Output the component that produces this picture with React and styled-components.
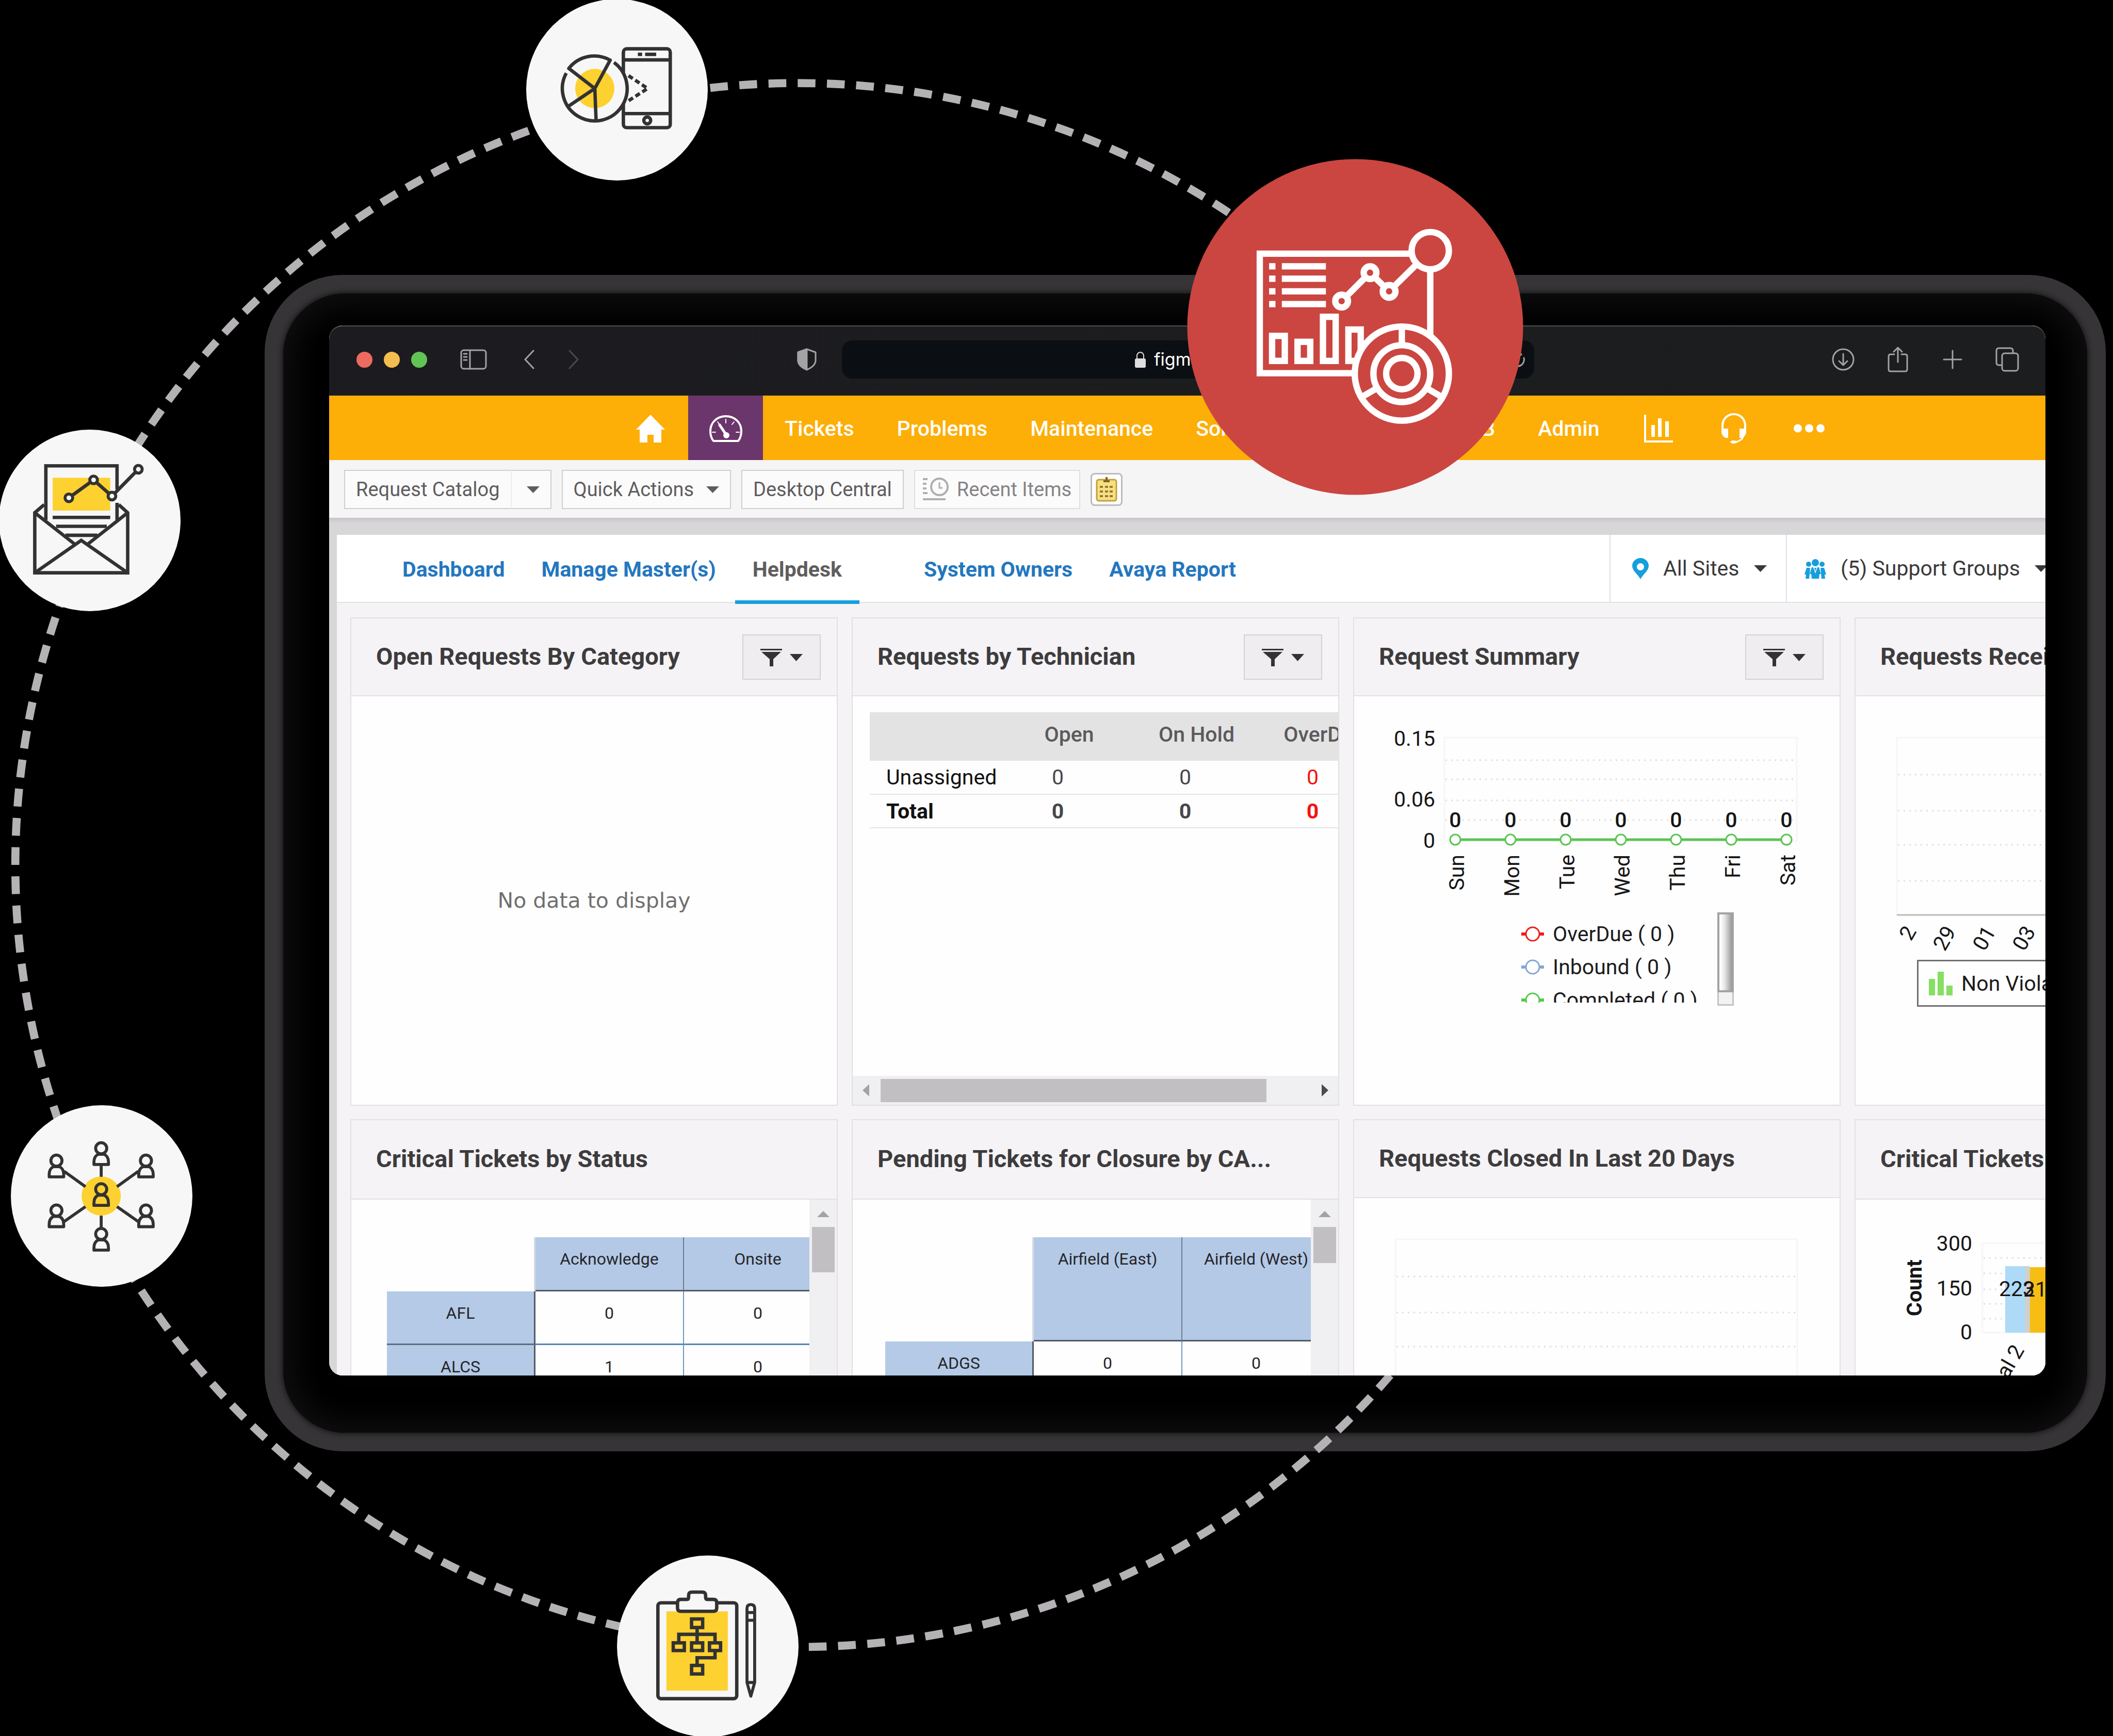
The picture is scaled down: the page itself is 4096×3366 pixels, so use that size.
import React from "react";
import styled, { createGlobalStyle, css } from "styled-components";

const ink = "#333233";
const sun = "#fdd130";
const paper = "#f8f7f8";
const line = "#e2e0e3";
const panel = "#f5f3f6";
const strip = "#d8d6d8";

const Global = createGlobalStyle`
  *, *::before, *::after { box-sizing: border-box; }
  html, body { margin: 0; background: #000; }
  body, button, input, select { font-family: Roboto, "Liberation Sans", sans-serif; }
  button { cursor: pointer; }
  svg { display: block; flex: none; }
`;

/* ---------- stage ---------- */

const Stage = styled.div`
  position: relative;
  display: flex;
  height: 100vh;
  padding: 533px 14px 552px 513px;
  overflow: hidden;
  background: #000;
`;

const Frame = styled.div`
  display: flex;
  flex: 1;
  min-width: 0;
  padding: 36px;
  border-radius: 150px;
  background: #363436;
`;

const Halo = styled.div`
  display: flex;
  flex: 1;
  min-width: 0;
  padding: 62px 81px 111px 89px;
  border-radius: 120px;
  background: #010102;
  box-shadow: 0 0 10px 3px #1b1a1b, inset 0 0 60px 14px #121112;
`;

const Orbit = styled.svg`
  position: absolute;
  z-index: 1;
  inset: 0;
  width: 100%;
  height: 100%;
  pointer-events: none;
`;

const Badge = styled.div`
  position: absolute;
  z-index: 3;
  left: ${(p) => p.$x}%;
  top: ${(p) => p.$y}%;
  width: ${(p) => (p.$large ? 651 : 352)}px;
  aspect-ratio: 1;
  border-radius: 50%;
  background: ${(p) => (p.$large ? "#cb4640" : paper)};
  transform: translate(-50%, -50%);
  svg { width: 100%; height: 100%; }
`;

/* ---------- browser window ---------- */

const Window = styled.main`
  position: relative;
  z-index: 2;
  display: flex;
  flex: 1;
  flex-direction: column;
  min-width: 0;
  overflow: hidden;
  border-radius: 26px;
  background: ${strip};
`;

const TitleBar = styled.header`
  display: grid;
  flex: none;
  grid-template-columns: 1fr 1342px 1fr;
  align-items: center;
  height: 136px;
  padding: 0 51px 6px 53px;
  border-top: 2px solid #4e4e50;
  border-radius: 26px 26px 0 0;
  background: linear-gradient(90deg, #1c1c20, #1c1d1e);
`;

const BarSide = styled.div`
  display: flex;
  align-items: center;
  justify-content: ${(p) => (p.$end ? "flex-end" : "flex-start")};
  gap: ${(p) => (p.$end ? 60 : 64)}px;
`;

const Lights = styled.div`
  display: flex;
  gap: 22px;
`;

const Light = styled.button`
  width: 31px;
  height: 31px;
  padding: 0;
  border: 0;
  border-radius: 50%;
  background: ${(p) => p.$color};
`;

const IconButton = styled.button`
  display: flex;
  align-items: center;
  justify-content: center;
  padding: 0;
  border: 0;
  background: none;
  color: ${(p) => (p.$dim ? "#4a4a4d" : "#a3a2a5")};
  ${(p) => p.$push && css`margin-left: auto; margin-right: 49px;`}
`;

const Address = styled.form`
  display: grid;
  grid-template-columns: 1fr auto 1fr;
  align-items: center;
  height: 74px;
  padding: 0 17px;
  border-radius: 20px;
  background: #0b0e12;
`;

const Url = styled.label`
  display: flex;
  grid-column: 2;
  align-items: center;
  gap: 16px;
  color: #dedee0;
`;

const UrlInput = styled.input`
  width: 168px;
  padding: 0;
  border: 0;
  outline: 0;
  background: none;
  color: #fff;
  font: 34px/44px Inter, sans-serif;
`;

const Reload = styled(IconButton)`
  justify-self: end;
`;

/* ---------- navigation ---------- */

const Nav = styled.nav`
  display: flex;
  flex: none;
  gap: 1px;
  height: 125px;
  padding-left: 550px;
  background: #fdae07;
`;

const NavLink = styled.a`
  display: flex;
  align-items: center;
  justify-content: center;
  padding: 2px ${(p) => (p.$icon ? 0 : 41)}px 0;
  width: ${(p) => (p.$icon ? "145px" : "auto")};
  background: ${(p) => (p.$active ? "#6b366b" : "none")};
  color: #fff;
  font-size: 41px;
  font-weight: 500;
  line-height: 48px;
  text-decoration: none;
`;

const Toolbar = styled.div`
  display: flex;
  flex: none;
  align-items: center;
  gap: 20px;
  height: 112px;
  padding: 2px 29px 0;
  background: #f6f5f6;
`;

const ToolButton = styled.button`
  display: flex;
  align-items: center;
  gap: ${(p) => (p.$icon ? 14 : 24)}px;
  height: 76px;
  padding: 0 ${(p) => (p.$icon ? 15 : 21)}px;
  border: 2px solid ${(p) => (p.$icon ? "#e0dfe0" : "#d0cfd0")};
  background: #fcfbfc;
  color: ${(p) => (p.$icon ? "#858485" : "#5e5d5e")};
  font-size: 38px;
  line-height: 48px;
  white-space: nowrap;
`;

const SplitGroup = styled.div`
  display: flex;
  ${ToolButton} + ${ToolButton} {
    padding: 0 21px 0 29px;
    border-left: 0;
  }
  ${ToolButton}:first-child {
    border-right-color: #eeedee;
  }
`;

const NoteButton = styled.button`
  display: flex;
  align-items: center;
  justify-content: center;
  width: 62px;
  height: 64px;
  padding: 0;
  border: 3px solid #bdbcbd;
  border-radius: 8px;
  background: #fff;
`;

/* ---------- workspace ---------- */

const Workspace = styled.div`
  flex: 1;
  min-height: 0;
  padding: 33px 0 0 15px;
  overflow: hidden;
  background: linear-gradient(#c6c4c6, ${strip} 10px);
`;

const Board = styled.div`
  background: ${panel};
`;

const TabRow = styled.div`
  display: flex;
  align-items: stretch;
  justify-content: space-between;
  height: 132px;
  padding-left: 93px;
  border-bottom: 2px solid ${line};
  background: #fff;
`;

const Tabs = styled.nav`
  display: flex;
  gap: 3px;
`;

const Tab = styled.a`
  display: flex;
  align-items: center;
  height: 134px;
  padding: 0 34px;
  margin-right: ${(p) => (p.$active ? 88 : 0)}px;
  border-top: 7px solid transparent;
  border-bottom: 7px solid ${(p) => (p.$active ? "#159fdc" : "transparent")};
  color: ${(p) => (p.$active ? "#5f5d5e" : "#2377bf")};
  font-size: 41px;
  font-weight: 700;
  line-height: 48px;
  text-decoration: none;
  white-space: nowrap;
`;

const Scopes = styled.div`
  display: flex;
`;

const Scope = styled.label`
  display: flex;
  flex: none;
  align-items: center;
  gap: 28px;
  width: ${(p) => (p.$wide ? 503 : 342)}px;
  padding-left: ${(p) => (p.$wide ? 34 : 42)}px;
  overflow: hidden;
  border-left: 2px solid ${line};
  color: #3a393a;
`;

const ScopeSelect = styled.select`
  flex: none;
  padding: 0;
  border: 0;
  appearance: none;
  background: none;
  color: inherit;
  font-size: 41px;
  line-height: 48px;
`;

const Grid = styled.div`
  display: grid;
  grid-template-columns: repeat(4, 945px);
  grid-auto-rows: 947px;
  gap: 26px 27px;
  padding: 28px 26px;
`;

const Card = styled.section`
  display: flex;
  flex-direction: column;
  min-width: 0;
  overflow: hidden;
  border: 2px solid ${line};
  background: #fefefe;
`;

const CardHead = styled.header`
  display: flex;
  flex: none;
  align-items: center;
  justify-content: space-between;
  height: ${(p) => (p.$tall ? 154 : 151)}px;
  padding: 0 31px 0 48px;
  border-bottom: 2px solid ${line};
  background: ${panel};
`;

const CardTitle = styled.h2`
  margin: 0;
  padding-bottom: 2px;
  color: #3d3c3d;
  font-size: 47px;
  font-weight: 700;
  line-height: 56px;
  white-space: nowrap;
`;

const FilterButton = styled.button`
  display: flex;
  align-items: center;
  justify-content: center;
  gap: 15px;
  width: 152px;
  height: 88px;
  padding: 2px 0 0;
  border: 2px solid #d4d2d5;
  background: #efedf0;
  color: #343334;
`;

const CardBody = styled.div`
  display: flex;
  flex: 1;
  flex-direction: ${(p) => (p.$row ? "row" : "column")};
  min-height: 0;
`;

const Empty = styled.p`
  margin: auto;
  color: #6f6f70;
  font: 41px/48px "DejaVu Sans", Verdana, sans-serif;
`;

/* ---------- technician table ---------- */

const TableClip = styled.div`
  flex: 1;
  padding: 31px 0 0 33px;
  overflow: hidden;
`;

const TechTable = styled.table`
  width: 982px;
  border-collapse: collapse;
  table-layout: fixed;
  color: #48474a;
  font-size: 41px;
  line-height: 48px;
  th, td { padding: 0; text-align: center; }
  thead th {
    height: 94px;
    padding: 0 0 8px 44px;
    background: #e4e3e4;
    color: #5b5a5c;
    font-weight: 500;
  }
  tbody th { padding-left: 32px; color: #111; font-weight: inherit; text-align: left; }
  tbody td:last-child { color: #f4130f; }
`;

const NameHead = styled.th`
  width: 241px;
`;

const TechRow = styled.tr`
  height: 65px;
  border-bottom: 2px solid #e6e5e6;
  font-weight: ${(p) => (p.$total ? 700 : 400)};
`;

/* ---------- scrollbars ---------- */

const ScrollX = styled.div`
  display: flex;
  align-items: center;
  justify-content: space-between;
  height: 56px;
  padding: 0 19px;
  background: #f0eff1;
`;

const ThumbX = styled.div`
  width: 748px;
  height: 45px;
  margin: 0 auto 0 22px;
  background: #c1bfc2;
`;

const ScrollY = styled.div`
  display: flex;
  flex: none;
  flex-direction: column;
  align-items: center;
  gap: 19px;
  width: 53px;
  padding-top: 22px;
  background: #f0eff1;
`;

const ThumbY = styled.div`
  width: 44px;
  height: ${(p) => p.$size}px;
  background: #c1bfc2;
`;

/* ---------- matrix table ---------- */

const MatrixClip = styled.div`
  flex: 1;
  min-width: 0;
  padding: 73px 0 0 ${(p) => p.$inset}px;
  overflow: hidden;
`;

const MatrixTable = styled.table`
  width: 864px;
  border-spacing: 0;
  table-layout: fixed;
  color: #26262a;
  font-size: 32px;
  line-height: 38px;
  th, td {
    height: 104px;
    padding: 23px 0 0;
    font-weight: 400;
    text-align: center;
    vertical-align: top;
    white-space: nowrap;
  }
  thead th {
    height: ${(p) => p.$head}px;
    border-right: 2px solid #6d7d92;
    border-bottom: 3px solid #525a66;
    background: #b4c9e6;
  }
  thead td { height: auto; border-right: 3px solid #d5dbe4; }
  tbody th {
    border-right: 3px solid #525a66;
    border-bottom: 3px solid #5f6d80;
    background: #b4cae6;
  }
  tbody td {
    border-right: 2px solid #6c97c4;
    border-bottom: 3px solid #5684b8;
  }
`;

/* ---------- charts ---------- */

const Chart = styled.svg`
  width: 941px;
  height: ${(p) => p.$h}px;
  font-family: Roboto, "Liberation Sans", sans-serif;
  font-size: 41px;
  fill: #161617;
`;

const SeriesBox = styled.div`
  display: flex;
  align-items: flex-start;
  gap: 34px;
  height: 181px;
  padding-left: 324px;
`;

const SeriesList = styled.ul`
  width: 346px;
  height: 175px;
  margin: 0;
  padding: 10px 0 0;
  overflow: hidden;
  list-style: none;
`;

const SeriesItem = styled.li`
  display: flex;
  align-items: center;
  gap: 17px;
  height: 64px;
  color: #1c1c1d;
  font-size: 41px;
  line-height: 48px;
  white-space: nowrap;
`;

const SeriesScroll = styled.div`
  width: 32px;
  height: 181px;
  border: 3px solid #c4c2c4;
  background: #f3f2f3;
`;

const SeriesThumb = styled.div`
  height: 155px;
  margin: -3px;
  border: 4px solid #a3a1a4;
  background: linear-gradient(90deg, #fff 10%, #e4e3e4 45%, #9a989b);
`;

const KeyBox = styled.div`
  display: flex;
  align-items: center;
  gap: 17px;
  width: 620px;
  height: 91px;
  margin-left: 119px;
  padding-left: 20px;
  border: 3px solid #716f73;
  color: #1c1c1d;
  font-size: 41px;
  line-height: 48px;
`;

/* ---------- drawings ---------- */

const Caret = ({ w = 25, h = 13 }) => (
  <svg width={w} height={h} viewBox="0 0 25 13" fill="currentColor" preserveAspectRatio="none">
    <path d="M0 0h25L12.500 13z" />
  </svg>
);

const Arrow = ({ d, color, w, h }) => (
  <svg width={w} height={h} viewBox={`0 0 ${w} ${h}`} fill={color}><path d={d} /></svg>
);

const Stroke = ({ w, h, sw = 3, children }) => (
  <svg width={w} height={h} viewBox={`0 0 ${w} ${h}`} fill="none" stroke="currentColor"
    strokeWidth={sw} strokeLinecap="round" strokeLinejoin="round">
    {children}
  </svg>
);

const Person = ({ x, y }) => (
  <g transform={`translate(${x} ${y})`}>
    <ellipse cx="0" cy="-13" rx="13" ry="13" />
    <path d="M-17 25v-6C-17 7-11 3-7 1H7C11 3 17 7 17 19v6z" />
  </g>
);

const PieIcon = () => (
  <svg viewBox="0 0 426 426" fill="none" stroke={ink} strokeWidth="8" strokeLinejoin="round">
    <rect x="228" y="117" width="110" height="185" rx="8" />
    <path d="M228 143h110M228 269h110" />
    <path d="M262 130h10M279 130h26" />
    <circle cx="284" cy="285" r="8" />
    <circle cx="161" cy="210" r="76" fill={paper} stroke="none" />
    <circle cx="161" cy="210" r="46" fill={sun} stroke="none" />
    <path d="M161 210 100 163A76 76 0 0 1 197 143.500zL100 251M161 210l3 75" />
    <path d="M206 149A76 76 0 1 1 94 174" />
    <path d="M240 180 285 210 240 239" strokeDasharray="12 7" />
  </svg>
);

const MailIcon = () => (
  <svg viewBox="0 0 426 426" fill="none" stroke={ink} strokeWidth="8">
    <rect x="126" y="113" width="135" height="77" fill={sun} stroke="none" />
    <path d="M110 212V85H277V140M277 172V212" />
    <path d="M126 206H261M134 227H253M156 248H231" />
    <path d="M106 176 84 195V336H302V195L281 176" />
    <path d="M84 195 178 269M302 195 208 269M84 336 193 260 302 336" />
    <path d="M164 160 222 118 265 156 327 93" />
    <g fill={paper} strokeWidth="7">
      <circle cx="164" cy="160" r="9" />
      <circle cx="222" cy="118" r="9" />
      <circle cx="265" cy="156" r="9" />
      <circle cx="327" cy="93" r="9" />
    </g>
  </svg>
);

const NetworkIcon = () => (
  <svg viewBox="0 0 426 426" fill="none" stroke={ink} strokeWidth="7" strokeLinejoin="round">
    <circle cx="212" cy="213" r="46" fill={sun} stroke="none" />
    <path d="M212 142V168M212 259V287M125 155 175 191M299 155 249 191M125 273 175 238M299 273 249 238" />
    {[[212, 114], [107, 143], [317, 143], [107, 260], [317, 260], [212, 315], [212, 210]].map(([x, y]) => (
      <Person key={`${x}-${y}`} x={x} y={y} />
    ))}
  </svg>
);

const ClipboardIcon = () => (
  <svg viewBox="0 0 426 426" fill="none" stroke={ink} strokeWidth="8" strokeLinejoin="round">
    <rect x="96" y="111" width="185" height="225" rx="7" />
    <rect x="116" y="131" width="144" height="186" fill={sun} stroke="none" />
    <path fill={paper} d="M150 131q-8 0-8-8v-12q0-8 8-8h14q4 0 4-5v-4q0-8 8-8h24q8 0 8 8v4q0 5 4 5h14q8 0 8 8v12q0 8-8 8z" />
    <g strokeLinejoin="miter">
      <rect x="175" y="149" width="26" height="20" />
      <rect x="132" y="205" width="26" height="18" />
      <rect x="175" y="205" width="26" height="18" />
      <rect x="217" y="205" width="26" height="18" />
      <rect x="175" y="258" width="26" height="20" />
      <path d="M188 169V205M145 205V185H230V205M230 223V240H188V258" />
    </g>
    <path strokeWidth="7" d="M305 124q0-9 9-9t9 9V298L314 330 305 298zM305 134H323M305 152H323M305 298H323" />
  </svg>
);

const AnalyticsIcon = () => (
  <svg viewBox="0 0 792 792" fill="none" stroke="#fff" strokeWidth="15">
    <path d="M524 223H171V505H400M573 262V420" />
    {[253, 282, 312, 342].map((y) => <path key={y} d={`M193 ${y}h15M223 ${y}h104`} />)}
    <path d="M364 335 431 268 476 312 541 248" />
    <g fill="#cb4640">
      <circle cx="364" cy="335" r="15" />
      <circle cx="431" cy="268" r="15" />
      <circle cx="476" cy="312" r="15" />
      <circle cx="573" cy="216" r="44" />
      <rect x="200" y="417" width="30" height="59" />
      <rect x="260" y="431" width="30" height="45" />
      <rect x="320" y="372" width="30" height="104" />
      <rect x="380" y="402" width="29" height="74" />
      <circle cx="506" cy="506" r="111" />
      <circle cx="506" cy="506" r="67" />
      <circle cx="506" cy="506" r="37" />
    </g>
    <path d="M506 395V439M410 562 448 540M602 562 564 540" />
  </svg>
);

const HomeIcon = () => (
  <svg width="56" height="54" viewBox="0 0 56 54" fill="#fff">
    <path d="M28 0 56 29H49V54H34V39H22V54H7V29H0z" />
  </svg>
);

const GaugeIcon = () => (
  <Stroke w={64} h={54} sw={4}>
    <path d="M8 51C4 46 2 40 2 32 2 15 15 3 32 3s30 12 30 29c0 8-2 14-6 19z" />
    <path d="M32 9v7M48 14l-4 5M58 34h-6M6 34h6M16 14l3 4" strokeWidth="2" />
    <path d="M20 20 32 38" strokeWidth="5" />
    <circle cx="33" cy="40" r="4" fill="currentColor" />
  </Stroke>
);

const BarsIcon = () => (
  <svg width="56" height="54" viewBox="0 0 56 54" fill="#fff">
    <path d="M0 0h4v50h52v4H0zM14 20h7v23h-7zM27 7h7v36h-7zM41 13h7v30h-7z" />
  </svg>
);

const HeadsetIcon = () => (
  <svg width="50" height="60" viewBox="0 0 50 60" fill="none" stroke="#fff" strokeWidth="4">
    <path d="M3 36V25C3 11 13 2 25 2s22 9 22 23v11" />
    <path d="M43 44q0 8-14 12" strokeWidth="3" />
    <g fill="#fff" stroke="none">
      <path d="M1 30h13v18H9Q1 44 1 36zM49 30H36v18h5q8-4 8-12z" />
      <ellipse cx="25" cy="56" rx="7" ry="3" />
    </g>
  </svg>
);

const DotsIcon = () => (
  <svg width="60" height="17" viewBox="0 0 60 17" fill="#fff">
    <circle cx="8" cy="8.500" r="8" /><circle cx="30" cy="8.500" r="8" /><circle cx="52" cy="8.500" r="8" />
  </svg>
);

const RecentIcon = () => (
  <svg width="52" height="46" viewBox="0 0 52 46" fill="none" stroke="#b0afb0" strokeWidth="4">
    <path d="M0 3h9M0 12h7M0 21h7M0 30h9M0 42h44" />
    <circle cx="32" cy="18" r="16" />
    <path d="M32 9v11h6" strokeWidth="3" />
  </svg>
);

const NoteIcon = () => (
  <svg width="42" height="48" viewBox="0 0 42 48">
    <rect x="2" y="5" width="38" height="41" rx="4" fill="#fae07c" stroke="#c3a042" strokeWidth="3" />
    <path d="M15 6h12v4H15zM19 0h4v8h-4z" fill="#7d6428" />
    <path d="M8 19h6M18 19h15M8 28h6M18 28h15M8 37h6M18 37h15" stroke="#8f7a45" strokeWidth="4" strokeDasharray="6 3" />
  </svg>
);

const PinIcon = () => (
  <svg width="32" height="41" viewBox="0 0 32 41" fill="#159fdc">
    <path fillRule="evenodd" d="M16 0C7 0 0 7 0 15c0 10 11 16 16 26 5-10 16-16 16-26C32 7 25 0 16 0zm0 10a7 7 0 1 1 0 14 7 7 0 0 1 0-14z" />
  </svg>
);

const PeopleIcon = () => (
  <svg width="42" height="39" viewBox="0 0 42 39" fill="#159fdc">
    <circle cx="8" cy="11" r="5" /><circle cx="34" cy="11" r="5" />
    <circle cx="21" cy="8" r="7" />
    <path d="M4 18h7L9 39H2l1-8H0zM38 18h-7l2 21h7l-1-8h3z" />
    <path d="M14 17h3l4 12 4-12h3l4 13h-3l-1 9H14l-1-9h-3z" />
    <path d="M19 18h4l-2 7z" />
  </svg>
);

const FunnelIcon = () => (
  <svg width="42" height="34" viewBox="0 0 42 34" fill="currentColor">
    <path d="M0 0h42v3H0zM2 6h38L25 20v14h-7V20z" />
  </svg>
);

const Marker = ({ color }) => (
  <svg width="44" height="32" viewBox="0 0 44 32" fill="#fff" stroke={color} strokeWidth="3">
    <path d="M0 16h44" strokeWidth="6" />
    <circle cx="22" cy="16" r="13" />
  </svg>
);

/* ---------- chart parts ---------- */

const Dots = ({ x1, x2, ys }) => (
  <path d={ys.map((y) => `M${x1} ${y}H${x2}`).join("")} fill="none" stroke="#e0dee0" strokeWidth="3" strokeDasharray="3 8" />
);

const days = ["Sun", "Mon", "Tue", "Wed", "Thu", "Fri", "Sat"];

const SummaryChart = () => (
  <Chart $h={419} viewBox="0 0 941 419">
    <rect x="175" y="80" width="683" height="201" fill="none" stroke="#f7f5f7" strokeWidth="3" />
    <Dots x1={177} x2={856} ys={[124, 161, 202, 240]} />
    {[["0.15", 96], ["0.06", 214], ["0", 294]].map(([t, y]) => (
      <text key={t} x="157" y={y} textAnchor="end">{t}</text>
    ))}
    <path d="M195 278H838" stroke="#5bc452" strokeWidth="5" />
    {days.map((d, i) => {
      const x = 196 + i * 107;
      return (
        <g key={d}>
          <circle cx={x} cy="278" r="10" fill="#fff" stroke="#5bc452" strokeWidth="3" />
          <text x={x} y="254" textAnchor="middle" fontWeight="500">0</text>
          <text transform={`translate(${x + 17} 307) rotate(-90)`} textAnchor="end">{d}</text>
        </g>
      );
    })}
  </Chart>
);

const BlankPlot = ({ labels = [] }) => (
  <Chart $h={511} viewBox="0 0 941 511">
    <rect x="80" y="80" width="779" height="345" fill="none" stroke="#f7f5f7" strokeWidth="3" />
    <Dots x1={82} x2={857} ys={[152, 222, 288, 358]} />
    <path d="M80 424H859" stroke="#bdbcb4" strokeWidth="3" />
    {labels.map((t, i) => (
      <text key={t} transform={`translate(${119 + i * 77} 456) rotate(-60)`} textAnchor="end">{t}</text>
    ))}
  </Chart>
);

const CountChart = () => (
  <Chart $h={511} viewBox="0 0 941 511">
    <rect x="246" y="84" width="640" height="174" fill="none" stroke="#f7f5f7" strokeWidth="3" />
    <Dots x1={248} x2={884} ys={[113, 143, 174, 202, 231]} />
    {[["300", 99], ["150", 186], ["0", 271]].map(([t, y]) => (
      <text key={t} x="226" y={y} textAnchor="end">{t}</text>
    ))}
    <text transform="translate(128 171) rotate(-90)" textAnchor="middle" fontWeight="700">Count</text>
    <rect x="290" y="129" width="39" height="129" fill="#addbf7" />
    <rect x="329" y="129" width="9" height="129" fill="#d0d0cc" />
    <rect x="338" y="131" width="39" height="127" fill="#f7bd13" />
    <text x="278" y="187">223</text>
    <text x="325" y="188">217</text>
    <text transform="translate(328 292) rotate(-60)" textAnchor="end">Terminal 2</text>
  </Chart>
);

/* ---------- composites ---------- */

const Widget = ({ title, filter, tall, row, children }) => (
  <Card aria-label={title}>
    <CardHead $tall={tall}>
      <CardTitle>{title}</CardTitle>
      {filter && (
        <FilterButton aria-label={`Filter ${title}`}>
          <FunnelIcon />
          <Caret w={25} h={14} />
        </FilterButton>
      )}
    </CardHead>
    <CardBody $row={row}>{children}</CardBody>
  </Card>
);

const Matrix = ({ head, inset, cols, rows, thumb }) => (
  <>
    <MatrixClip $inset={inset}>
      <MatrixTable $head={head}>
        <thead>
          <tr><td />{cols.map((c) => <th key={c} scope="col">{c}</th>)}</tr>
        </thead>
        <tbody>
          {rows.map(([name, ...cells]) => (
            <tr key={name}>
              <th scope="row">{name}</th>
              {cells.map((c, i) => <td key={i}>{c}</td>)}
            </tr>
          ))}
        </tbody>
      </MatrixTable>
    </MatrixClip>
    <ScrollY>
      <Arrow w={24} h={12} d="M12 0 24 12H0z" color="#a3a2a4" />
      <ThumbY $size={thumb} />
    </ScrollY>
  </>
);

const tabs = ["Dashboard", "Manage Master(s)", "Helpdesk", "System Owners", "Avaya Report"];
const series = [["OverDue ( 0 )", "#ee1c1c"], ["Inbound ( 0 )", "#83a6d4"], ["Completed ( 0 )", "#55c94c"]];

export default function App() {
  return (
    <Stage>
      <Global />
      <Frame>
        <Halo>
          <Window>
            <TitleBar>
              <BarSide>
                <Lights>
                  <Light $color="#ee6a5f" aria-label="Close" />
                  <Light $color="#f5bd4f" aria-label="Minimise" />
                  <Light $color="#61c454" aria-label="Zoom" />
                </Lights>
                <IconButton aria-label="Sidebar">
                  <Stroke w={52} h={40}>
                    <rect x="2" y="2" width="48" height="36" rx="5" />
                    <path d="M19 2v36M7 9h6M7 15h6M7 21h6" />
                  </Stroke>
                </IconButton>
                <IconButton aria-label="Back">
                  <Stroke w={30} h={38}><path d="M26 2 10 19 26 36" /></Stroke>
                </IconButton>
                <IconButton $dim aria-label="Forward">
                  <Stroke w={22} h={38}><path d="M2 2 18 19 2 36" /></Stroke>
                </IconButton>
                <IconButton $push aria-label="Privacy report">
                  <Stroke w={38} h={44}>
                    <path d="M19 2 36 8V24C36 33 28 38 19 42 10 38 2 33 2 24V8z" />
                    <path d="M19 2V42C10 38 2 33 2 24V8z" fill="currentColor" />
                  </Stroke>
                </IconButton>
              </BarSide>
              <Address>
                <Url>
                  <svg width="21" height="31" viewBox="0 0 21 31" fill="currentColor">
                    <rect y="13" width="21" height="18" rx="3" />
                    <path d="M4 14V8a6.500 7 0 0 1 13 0v6" fill="none" stroke="currentColor" strokeWidth="2" />
                  </svg>
                  <UrlInput aria-label="Address" defaultValue="figma.com" />
                </Url>
                <Reload type="button" aria-label="Reload">
                  <Stroke w={30} h={34}>
                    <path d="M27 14a13 13 0 1 1-6-8M14 1l8 6-7 6" />
                  </Stroke>
                </Reload>
              </Address>
              <BarSide $end>
                <IconButton aria-label="Downloads">
                  <Stroke w={46} h={46}>
                    <circle cx="23" cy="23" r="20" /><path d="M23 12v21M15 26l8 8 8-8" />
                  </Stroke>
                </IconButton>
                <IconButton aria-label="Share">
                  <Stroke w={46} h={50}>
                    <path d="M16 15H9q-4 0-4 4v25q0 4 4 4h28q4 0 4-4V19q0-4-4-4h-7M23 30V2M15 10l8-8 8 8" />
                  </Stroke>
                </IconButton>
                <IconButton aria-label="New tab">
                  <Stroke w={46} h={38}><path d="M23 2v34M6 19h34" /></Stroke>
                </IconButton>
                <IconButton aria-label="Tab overview">
                  <Stroke w={46} h={48}>
                    <rect x="13" y="12" width="31" height="34" rx="5" />
                    <path d="M12 35H7q-5 0-5-5V7q0-5 5-5h22q5 0 5 5v4" />
                  </Stroke>
                </IconButton>
              </BarSide>
            </TitleBar>

            <Nav aria-label="Main">
              <NavLink href="#home" $icon aria-label="Home"><HomeIcon /></NavLink>
              <NavLink href="#dash" $icon $active aria-label="Dashboard"><GaugeIcon /></NavLink>
              {["Tickets", "Problems", "Maintenance", "Solutions", "Assets", "CMDB", "Admin"].map((t) => (
                <NavLink key={t} href={`#${t}`}>{t}</NavLink>
              ))}
              <NavLink href="#reports" $icon aria-label="Reports"><BarsIcon /></NavLink>
              <NavLink href="#support" $icon aria-label="Support"><HeadsetIcon /></NavLink>
              <NavLink href="#more" $icon aria-label="More"><DotsIcon /></NavLink>
            </Nav>

            <Toolbar>
              <SplitGroup>
                <ToolButton>Request Catalog</ToolButton>
                <ToolButton aria-label="Open catalog menu"><Caret /></ToolButton>
              </SplitGroup>
              <ToolButton>Quick Actions<Caret /></ToolButton>
              <ToolButton>Desktop Central</ToolButton>
              <ToolButton $icon><RecentIcon />Recent Items</ToolButton>
              <NoteButton aria-label="Notes"><NoteIcon /></NoteButton>
            </Toolbar>

            <Workspace>
              <Board>
                <TabRow>
                  <Tabs aria-label="Dashboards">
                    {tabs.map((t) => (
                      <Tab key={t} href={`#${t}`} $active={t === "Helpdesk"}>{t}</Tab>
                    ))}
                  </Tabs>
                  <Scopes>
                    <Scope>
                      <PinIcon />
                      <ScopeSelect aria-label="Site"><option>All Sites</option></ScopeSelect>
                      <Caret />
                    </Scope>
                    <Scope $wide>
                      <PeopleIcon />
                      <ScopeSelect aria-label="Support group"><option>(5) Support Groups</option></ScopeSelect>
                      <Caret />
                    </Scope>
                  </Scopes>
                </TabRow>

                <Grid>
                  <Widget title="Open Requests By Category" filter>
                    <Empty>No data to display</Empty>
                  </Widget>

                  <Widget title="Requests by Technician" filter>
                    <TableClip>
                      <TechTable>
                        <thead>
                          <tr>
                            <NameHead aria-label="Technician" />
                            <th scope="col">Open</th>
                            <th scope="col">On Hold</th>
                            <th scope="col">OverDue</th>
                          </tr>
                        </thead>
                        <tbody>
                          {["Unassigned", "Total"].map((n) => (
                            <TechRow key={n} $total={n === "Total"}>
                              <th scope="row">{n}</th><td>0</td><td>0</td><td>0</td>
                            </TechRow>
                          ))}
                        </tbody>
                      </TechTable>
                    </TableClip>
                    <ScrollX>
                      <Arrow w={13} h={24} d="M13 0V24L0 12z" color="#a3a2a4" />
                      <ThumbX />
                      <Arrow w={13} h={24} d="M0 0V24L13 12z" color="#4b4a4c" />
                    </ScrollX>
                  </Widget>

                  <Widget title="Request Summary" filter>
                    <SummaryChart />
                    <SeriesBox>
                      <SeriesList>
                        {series.map(([t, c]) => (
                          <SeriesItem key={t}><Marker color={c} />{t}</SeriesItem>
                        ))}
                      </SeriesList>
                      <SeriesScroll><SeriesThumb /></SeriesScroll>
                    </SeriesBox>
                  </Widget>

                  <Widget title="Requests Received In Last 20 Days">
                    <BlankPlot labels={["2", "29", "01", "03"]} />
                    <KeyBox>
                      <svg width="46" height="46" viewBox="0 0 46 46" fill="#84df62">
                        <path d="M0 14h12v32H0zM17 0h12v46H17zM34 27h12v19H34z" />
                      </svg>
                      Non Violated
                    </KeyBox>
                  </Widget>

                  <Widget title="Critical Tickets by Status" tall row>
                    <Matrix head={105} inset={69} thumb={88} cols={["Acknowledge", "Onsite"]} rows={[["AFL", 0, 0], ["ALCS", 1, 0]]} />
                  </Widget>

                  <Widget title="Pending Tickets for Closure by CA..." tall row>
                    <Matrix head={202} inset={63} thumb={70} cols={["Airfield (East)", "Airfield (West)"]} rows={[["ADGS", 0, 0]]} />
                  </Widget>

                  <Widget title="Requests Closed In Last 20 Days">
                    <BlankPlot />
                  </Widget>

                  <Widget title="Critical Tickets by Terminal" tall>
                    <CountChart />
                  </Widget>
                </Grid>
              </Board>
            </Workspace>
          </Window>
        </Halo>
      </Frame>

      <Orbit viewBox="0 0 4984 4096" aria-hidden="true">
        <circle cx="1881" cy="2041" r="1845" fill="none" stroke="#b4b2b4" strokeWidth="19" strokeDasharray="42 27" />
      </Orbit>
      <Badge $x={29.19} $y={5.17}><PieIcon /></Badge>
      <Badge $x={4.25} $y={29.98}><MailIcon /></Badge>
      <Badge $x={4.82} $y={68.9}><NetworkIcon /></Badge>
      <Badge $x={33.49} $y={94.82}><ClipboardIcon /></Badge>
      <Badge $x={64.13} $y={18.85} $large><AnalyticsIcon /></Badge>
    </Stage>
  );
}
